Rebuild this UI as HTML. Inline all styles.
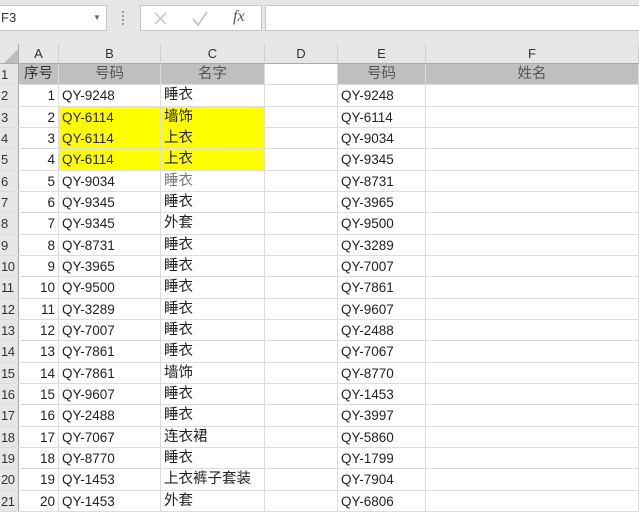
<!DOCTYPE html>
<html><head><meta charset="utf-8"><style>
*{margin:0;padding:0;box-sizing:border-box}
body{width:639px;height:505px;overflow:hidden;background:#fff;font-family:"Liberation Sans","Noto Sans CJK SC",sans-serif;position:relative}
.tb{position:absolute;left:0;top:0;width:639px;height:44px;background:#e6e6e6}
.nb{position:absolute;left:0;top:5px;width:107px;height:26px;background:#fff;border:1px solid #c6c6c6;border-left:none;font-size:13px;line-height:24px;padding-left:1px;color:#333}
.fb{position:absolute;left:140px;top:5px;width:122px;height:26px;background:#fff;border:1px solid #c6c6c6}
.fi{position:absolute;left:265px;top:5px;width:380px;height:26px;background:#fff;border:1px solid #c6c6c6}
.ch{position:absolute;top:44px;height:20px;background:#e6e6e6;border-right:1px solid #d0d0d0;border-bottom:1px solid #ababab;text-align:center;font-size:13px;line-height:19px;color:#333}
.rows{position:absolute;left:0;top:64px;width:639px}
.r{height:21.33px;display:flex;border-bottom:1px solid #dcdcdc;font-size:13.5px;line-height:21px;color:#222}
.r div{border-right:1px solid #dcdcdc;white-space:nowrap;overflow:hidden}
.h{width:19px;flex:none;background:#e6e6e6;color:#333;font-size:13px;text-align:left;padding-left:1px;border-right:1px solid #ababab!important;letter-spacing:-0.5px}
.a{width:40px;text-align:right;padding-right:3px}
.b{width:102px;padding-left:3px}
.c{width:104px;padding-left:3px;font-size:14.5px}
.d{width:73px}
.e{width:88px;padding-left:3px}
.f{flex:1}
.g{background:#bfbfbf;color:#555}
.y{background:#ff0}
.cen{text-align:center;padding:0!important}
</style></head><body>
<div class="tb"></div>
<div class="nb">F3<span style="position:absolute;left:93px;top:0;font-size:8px;color:#666">▼</span></div>
<div style="position:absolute;left:122px;top:11px;width:2px;height:14px;border-left:2px dotted #999"></div>
<div class="fb"><svg width="122" height="26" style="position:absolute;left:0;top:0"><path d="M14 7 L25 18 M25 7 L14 18" stroke="#c4c4c4" stroke-width="1.5"/><path d="M52 13 L57 19 L66 6" stroke="#c4c4c4" stroke-width="1.8" fill="none"/></svg><span style="position:absolute;left:92px;top:2px;font-size:16px;font-style:italic;font-family:'Liberation Serif',serif;color:#555">fx</span></div>
<div class="fi"></div>
<div class="ch" style="left:0;width:19px;border-right:1px solid #ababab"><svg width="14" height="14" style="position:absolute;left:4px;top:5px"><path d="M14 0 L14 14 L0 14Z" fill="#bdbdbd"/></svg></div>
<div class="ch" style="left:19px;width:40px">A</div>
<div class="ch" style="left:59px;width:102px">B</div>
<div class="ch" style="left:161px;width:104px">C</div>
<div class="ch" style="left:265px;width:73px">D</div>
<div class="ch" style="left:338px;width:88px">E</div>
<div class="ch" style="left:426px;width:213px">F</div>
<div class="rows">
<div class="r"><div class="h">1</div><div class="a g cen" style="font-size:14.5px;color:#333">序号</div><div class="b g cen" style="font-size:14.5px">号码</div><div class="c g cen">名字</div><div class="d"></div><div class="e g cen" style="font-size:14.5px">号码</div><div class="f g cen" style="font-size:14.5px">姓名</div></div>
<div class="r"><div class="h">2</div><div class="a">1</div><div class="b">QY-9248</div><div class="c">睡衣</div><div class="d"></div><div class="e">QY-9248</div><div class="f"></div></div>
<div class="r"><div class="h">3</div><div class="a">2</div><div class="b y">QY-6114</div><div class="c y">墙饰</div><div class="d"></div><div class="e">QY-6114</div><div class="f"></div></div>
<div class="r"><div class="h">4</div><div class="a">3</div><div class="b y">QY-6114</div><div class="c y">上衣</div><div class="d"></div><div class="e">QY-9034</div><div class="f"></div></div>
<div class="r"><div class="h">5</div><div class="a">4</div><div class="b y">QY-6114</div><div class="c y">上衣</div><div class="d"></div><div class="e">QY-9345</div><div class="f"></div></div>
<div class="r"><div class="h">6</div><div class="a">5</div><div class="b">QY-9034</div><div class="c" style="color:#777">睡衣</div><div class="d"></div><div class="e">QY-8731</div><div class="f"></div></div>
<div class="r"><div class="h">7</div><div class="a">6</div><div class="b">QY-9345</div><div class="c">睡衣</div><div class="d"></div><div class="e">QY-3965</div><div class="f"></div></div>
<div class="r"><div class="h">8</div><div class="a">7</div><div class="b">QY-9345</div><div class="c">外套</div><div class="d"></div><div class="e">QY-9500</div><div class="f"></div></div>
<div class="r"><div class="h">9</div><div class="a">8</div><div class="b">QY-8731</div><div class="c">睡衣</div><div class="d"></div><div class="e">QY-3289</div><div class="f"></div></div>
<div class="r"><div class="h">10</div><div class="a">9</div><div class="b">QY-3965</div><div class="c">睡衣</div><div class="d"></div><div class="e">QY-7007</div><div class="f"></div></div>
<div class="r"><div class="h">11</div><div class="a">10</div><div class="b">QY-9500</div><div class="c">睡衣</div><div class="d"></div><div class="e">QY-7861</div><div class="f"></div></div>
<div class="r"><div class="h">12</div><div class="a">11</div><div class="b">QY-3289</div><div class="c">睡衣</div><div class="d"></div><div class="e">QY-9607</div><div class="f"></div></div>
<div class="r"><div class="h">13</div><div class="a">12</div><div class="b">QY-7007</div><div class="c">睡衣</div><div class="d"></div><div class="e">QY-2488</div><div class="f"></div></div>
<div class="r"><div class="h">14</div><div class="a">13</div><div class="b">QY-7861</div><div class="c">睡衣</div><div class="d"></div><div class="e">QY-7067</div><div class="f"></div></div>
<div class="r"><div class="h">15</div><div class="a">14</div><div class="b">QY-7861</div><div class="c">墙饰</div><div class="d"></div><div class="e">QY-8770</div><div class="f"></div></div>
<div class="r"><div class="h">16</div><div class="a">15</div><div class="b">QY-9607</div><div class="c">睡衣</div><div class="d"></div><div class="e">QY-1453</div><div class="f"></div></div>
<div class="r"><div class="h">17</div><div class="a">16</div><div class="b">QY-2488</div><div class="c">睡衣</div><div class="d"></div><div class="e">QY-3997</div><div class="f"></div></div>
<div class="r"><div class="h">18</div><div class="a">17</div><div class="b">QY-7067</div><div class="c">连衣裙</div><div class="d"></div><div class="e">QY-5860</div><div class="f"></div></div>
<div class="r"><div class="h">19</div><div class="a">18</div><div class="b">QY-8770</div><div class="c">睡衣</div><div class="d"></div><div class="e">QY-1799</div><div class="f"></div></div>
<div class="r"><div class="h">20</div><div class="a">19</div><div class="b">QY-1453</div><div class="c">上衣裤子套装</div><div class="d"></div><div class="e">QY-7904</div><div class="f"></div></div>
<div class="r"><div class="h">21</div><div class="a">20</div><div class="b">QY-1453</div><div class="c">外套</div><div class="d"></div><div class="e">QY-6806</div><div class="f"></div></div>
</div>
</body></html>
